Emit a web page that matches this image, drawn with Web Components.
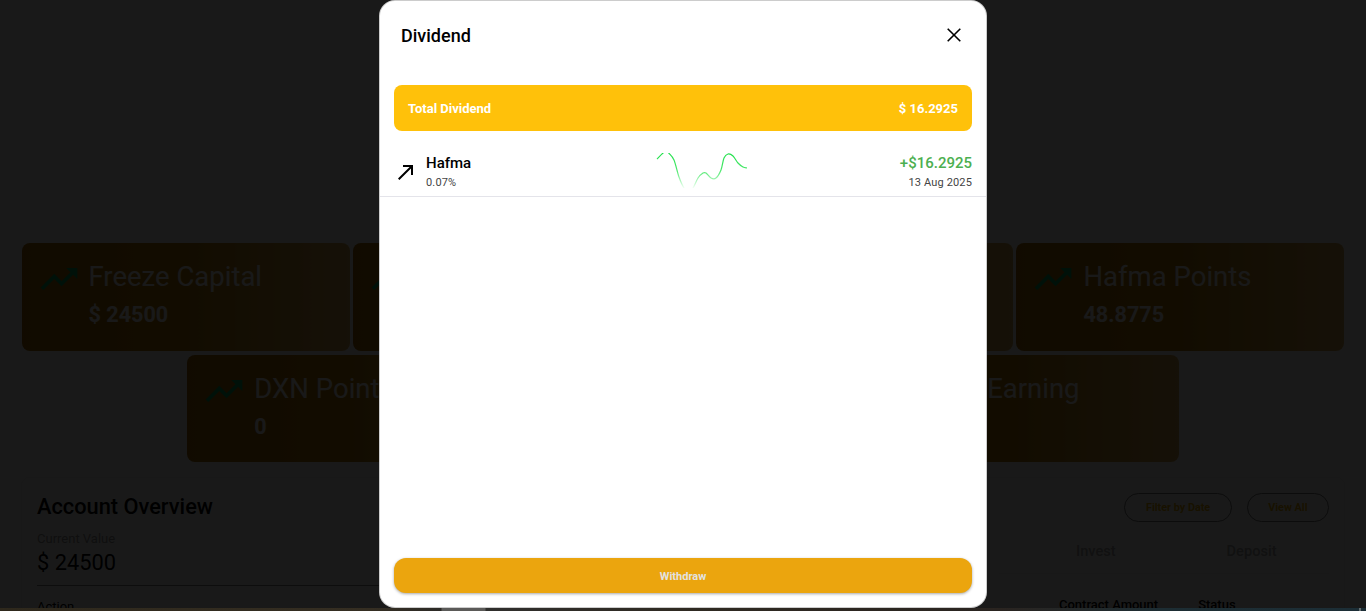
<!DOCTYPE html>
<html lang="en">
<head>
<meta charset="utf-8">
<title>Dividend</title>
<style>
  html, body { margin: 0; height: 100%; overflow: hidden; background: #fff; }
  body { font-family: Roboto, "Liberation Sans", sans-serif; }
</style>
</head>
<body>
<app-page>
  <stat-card slot="cards" title-text="Freeze Capital" value="$ 24500"></stat-card>
  <stat-card slot="cards"></stat-card>
  <stat-card slot="cards"></stat-card>
  <stat-card slot="cards" title-text="Hafma Points" value="48.8775"></stat-card>
  <stat-card slot="cards" title-text="DXN Points" value="0"></stat-card>
  <stat-card slot="cards"></stat-card>
  <stat-card slot="cards" title-text="Earning" indent="69.5"></stat-card>
  <overview-panel slot="overview"></overview-panel>
  <dividend-modal slot="modal">
    <dividend-row name="Hafma" rate="0.07%" amount="+$16.2925" date="13 Aug 2025"></dividend-row>
  </dividend-modal>
</app-page>

<script>
const TRENDING_UP = 'M16 6l2.29 2.29-4.88 4.88-4-4L2 16.59 3.41 18l6-6 4 4 6.3-6.29L22 12V6z';

class AppPage extends HTMLElement {
  constructor() {
    super();
    this.attachShadow({ mode: 'open' });
    this.shadowRoot.innerHTML = `
      <style>
        :host { display: flex; flex-direction: column; height: 100vh; }
        main { flex: 1; min-height: 0; position: relative; overflow: hidden; }
        .cards { display: flex; flex-wrap: wrap; justify-content: center; gap: 4px 3.67px; padding: 243px 21px 0; }
        .backdrop { position: absolute; inset: 0; background: rgba(0, 0, 0, .9); }
        .strip {
          height: 3px; position: relative;
          background: linear-gradient(90deg, #2e281c 0, #352e22 370px, #2c2a26 441px, #5b5a58 442px, #5b5a58 485px, #2f2e2c 486px, #2f2a22 680px, #2a2420 1000px, #1d2d33 1160px, #1c2e36 1359px, #b0b0b0 1360px, #1c2e36 1361px);
        }
      </style>
      <main>
        <div class="cards"><slot name="cards"></slot></div>
        <slot name="overview"></slot>
        <div class="backdrop"></div>
        <slot name="modal"></slot>
      </main>
      <div class="strip"></div>
    `;
  }
}
customElements.define('app-page', AppPage);

class StatCard extends HTMLElement {
  constructor() {
    super();
    this.attachShadow({ mode: 'open' });
  }

  connectedCallback() {
    const title = this.getAttribute('title-text') || '';
    const value = this.getAttribute('value') || '';
    const indent = this.getAttribute('indent') || 0;
    this.shadowRoot.innerHTML = `
      <style>
        :host {
          display: flex; gap: 8px; box-sizing: border-box; width: 328px; height: 107.5px;
          padding: 14px 15px; border-radius: 8px; color: #fff;
          background: linear-gradient(90deg, #a86c00, #b87c08 50%, #d8a850);
        }
        svg { width: 44px; height: 44px; flex: none; fill: #00b060; }
        .title { font-size: 27.5px; line-height: 40px; margin-left: ${indent}px; white-space: nowrap; }
        .value { font-size: 21.6px; font-weight: 700; line-height: 30px; margin-top: 3px; }
      </style>
      <svg viewBox="0 0 24 24"><path d="${TRENDING_UP}"/></svg>
      <div>
        <div class="title">${title}</div>
        <div class="value">${value}</div>
      </div>
    `;
  }
}
customElements.define('stat-card', StatCard);

class OverviewPanel extends HTMLElement {
  constructor() {
    super();
    this.attachShadow({ mode: 'open' });
    this.shadowRoot.innerHTML = `
      <style>
        :host {
          display: grid; grid-template-columns: 1fr 330px; margin: 15px 21px 0; padding: 15px 15px 0;
          border: 1px solid #eee; border-radius: 8px; color: #000;
        }
        .left { margin-right: 100px; }
        h2 { margin: 0; font-size: 21.8px; font-weight: 500; line-height: 28px; }
        .label { margin-top: 9px; font-size: 13px; line-height: 18px; color: #999; }
        .amount { font-size: 21.8px; line-height: 30px; padding-bottom: 7px; border-bottom: 1px solid #888; }
        .action { margin-top: 12px; font-size: 13px; line-height: 18px; }
        .pills { display: flex; justify-content: flex-end; gap: 15px; }
        .pill {
          box-sizing: border-box; height: 29px; padding: 0 20.5px; border: 1px solid #777; border-radius: 15px;
          font-size: 10.8px; font-weight: 700; line-height: 27px; color: #e8ae00;
        }
        .tabs { display: flex; margin-top: 19px; padding-bottom: 12px; border-bottom: 1px solid #eee; font-size: 14.6px; font-weight: 500; line-height: 20px; color: #aaa; }
        .tabs span:first-child { margin-left: 77px; }
        .tabs span:last-child { margin-left: 111px; }
        .heads { display: flex; margin-top: 22px; font-size: 13px; font-weight: 500; line-height: 18px; }
        .heads span:first-child { margin-left: 60px; }
        .heads span:last-child { margin-left: 40px; }
      </style>
      <div class="left">
        <h2>Account Overview</h2>
        <div class="label">Current Value</div>
        <div class="amount">$ 24500</div>
        <div class="action">Action</div>
      </div>
      <div class="right">
        <div class="pills"><span class="pill">Filter by Date</span><span class="pill">View All</span></div>
        <div class="tabs"><span>Invest</span><span>Deposit</span></div>
        <div class="heads"><span>Contract Amount</span><span>Status</span></div>
      </div>
    `;
  }
}
customElements.define('overview-panel', OverviewPanel);

class DividendModal extends HTMLElement {
  constructor() {
    super();
    this.attachShadow({ mode: 'open' });
    this.shadowRoot.innerHTML = `
      <style>
        :host {
          position: absolute; top: 0; left: 379px; width: 608px; height: 608px; box-sizing: border-box;
          display: flex; flex-direction: column; background: #fff; border: 1px solid rgba(0, 0, 0, .2);
          border-radius: 16px; color: #000;
        }
        header { display: flex; align-items: center; justify-content: space-between; height: 70px; padding: 0 20px 0 21px; flex: none; }
        h1 { margin: 0 0 2px; font-size: 18px; font-weight: 500; }
        .close { display: block; width: 24px; height: 24px; margin-top: -2px; fill: none; stroke: #000; stroke-width: 1.6; }
        .total {
          display: flex; justify-content: space-between; align-items: center; flex: none; margin: 14px 14px 0; padding: 0 14px;
          height: 46px; border-radius: 8px; background: #ffc10a; color: #fff; font-size: 13px; font-weight: 700;
        }
        .list { flex: 1; min-height: 0; }
        .withdraw {
          flex: none; margin: 0 14px 14px; height: 35px; border: 0; border-radius: 12px; padding: 1px 0 0;
          background: #eba50e; color: #e2e2e2; font: 700 11px Roboto, sans-serif;
          box-shadow: 0 1px 3px rgba(0, 0, 0, .35);
        }
      </style>
      <header>
        <h1>Dividend</h1>
        <svg class="close" viewBox="0 0 24 24"><path d="M5.7 5.7 18.3 18.3M18.3 5.7 5.7 18.3"/></svg>
      </header>
      <div class="total"><span>Total Dividend</span><span>$ 16.2925</span></div>
      <div class="list"><slot></slot></div>
      <button class="withdraw">Withdraw</button>
    `;
  }
}
customElements.define('dividend-modal', DividendModal);

class DividendRow extends HTMLElement {
  constructor() {
    super();
    this.attachShadow({ mode: 'open' });
  }

  connectedCallback() {
    this.shadowRoot.innerHTML = `
      <style>
        :host {
          display: flex; box-sizing: border-box; height: 66px; padding: 0 14px;
          border-bottom: 1px solid #e4e4ea; color: #000;
        }
        .arrow { width: 24px; height: 24px; margin-top: 29px; flex: none; }
        .who { margin-left: 8px; }
        .name, .amount { margin-top: 22px; font-size: 15px; line-height: 20px; }
        .name { font-weight: 500; }
        .amount { font-weight: 500; color: #4caf50; }
        .small { margin-top: 3px; font-size: 11px; line-height: 14px; letter-spacing: .15px; color: #444; }
        .mid { flex: 1; min-width: 0; padding-left: 181px; }
        spark-line { margin-top: 22px; }
        .end { text-align: right; }
      </style>
      <svg class="arrow" viewBox="0 0 24 24"><path d="M9 5v2h6.59L4 18.59 5.41 20 17 8.41V15h2V5z"/></svg>
      <div class="who">
        <div class="name">${this.getAttribute('name')}</div>
        <div class="small">${this.getAttribute('rate')}</div>
      </div>
      <div class="mid"><spark-line></spark-line></div>
      <div class="end">
        <div class="amount">${this.getAttribute('amount')}</div>
        <div class="small">${this.getAttribute('date')}</div>
      </div>
    `;
  }
}
customElements.define('dividend-row', DividendRow);

class SparkLine extends HTMLElement {
  constructor() {
    super();
    this.attachShadow({ mode: 'open' });
    // points read off the reference, peak and valley run out of the box
    const pts = [[5,6],[10.7,.3],[14,-2],[17,.3],[22,7],[27,24],[32,35],[36.5,38],[41,35],[46,25],[51,20],[54,20],[59,25],[64,25],[69,17],[72,5],[76,1],[81,3],[86,10],[91,14],[95,15]];
    let d = `M${pts[0]}`;
    for (let i = 0; i < pts.length - 1; i++) {
      const p0 = pts[i - 1] || pts[i], p1 = pts[i], p2 = pts[i + 1], p3 = pts[i + 2] || p2;
      const c1 = [p1[0] + (p2[0] - p0[0]) / 6, p1[1] + (p2[1] - p0[1]) / 6];
      const c2 = [p2[0] - (p3[0] - p1[0]) / 6, p2[1] - (p3[1] - p1[1]) / 6];
      d += `C${c1} ${c2} ${p2}`;
    }
    this.shadowRoot.innerHTML = `
      <style>
        :host { display: block; width: 100px; height: 35px; }
        svg { display: block; overflow: hidden; }
      </style>
      <svg width="100" height="35" viewBox="0 0 100 35">
        <defs>
          <linearGradient id="fade" gradientUnits="userSpaceOnUse" x1="0" y1="0" x2="0" y2="35">
            <stop offset="0" stop-color="#1fe04a"/>
            <stop offset=".5" stop-color="#4ce86c"/>
            <stop offset="1" stop-color="#f2fff4"/>
          </linearGradient>
        </defs>
        <path d="${d}" fill="none" stroke="url(#fade)" stroke-width="1.2"/>
      </svg>
    `;
  }
}
customElements.define('spark-line', SparkLine);
</script>
</body>
</html>
